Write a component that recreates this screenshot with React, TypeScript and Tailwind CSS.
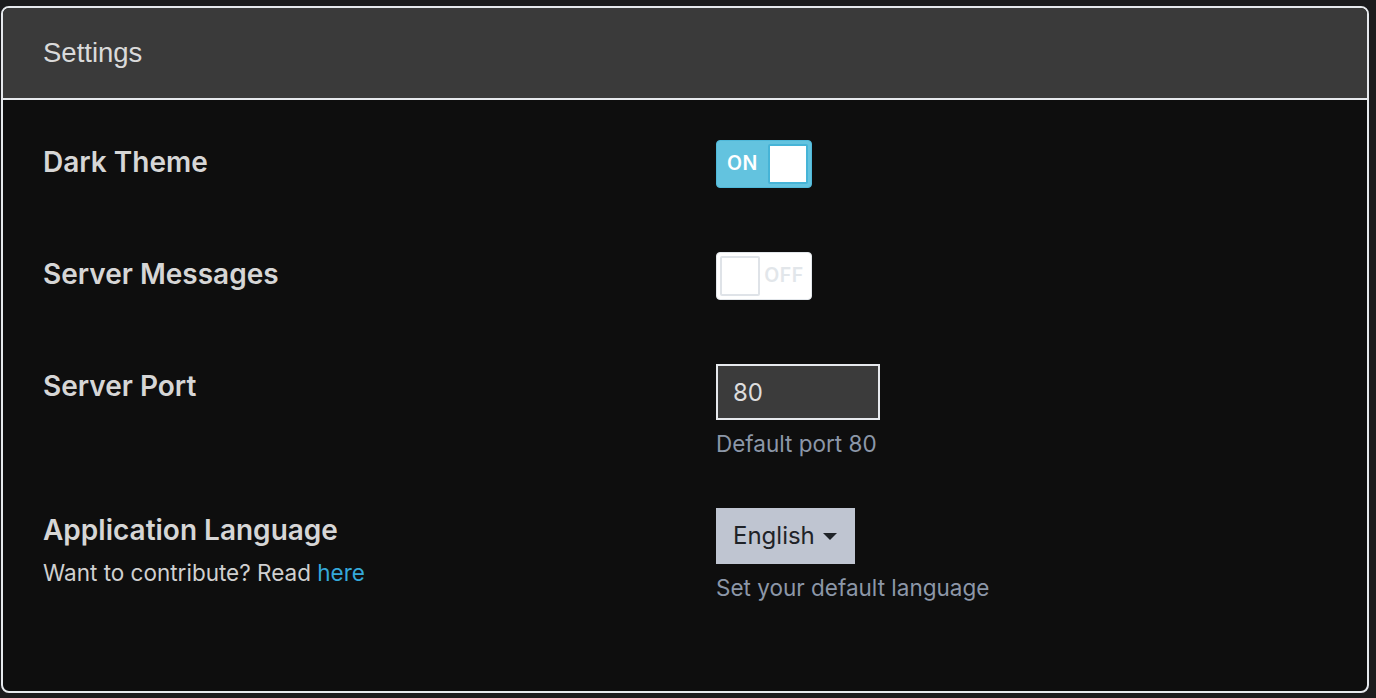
import { useState } from 'react'

const inter = { fontFamily: 'Inter, "Noto Sans", sans-serif' }

function Toggle({ on, onChange }: { on: boolean; onChange: () => void }) {
  return on ? (
    <button
      type="button"
      onClick={onChange}
      className="flex h-[48px] w-[96px] items-center rounded-[4px] border border-[#4fb8d9] bg-[#63c3df] p-[3px]"
    >
      <span className="flex-1 pr-[3px] text-center text-[19.5px] font-semibold tracking-wide text-white">ON</span>
      <span className="h-[40px] w-[40px] rounded-[2px] border-2 border-[#46b4d7] bg-white" />
    </button>
  ) : (
    <button
      type="button"
      onClick={onChange}
      className="flex h-[48px] w-[96px] items-center rounded-[4px] border border-[#e2e6ea] bg-white p-[3px]"
    >
      <span className="h-[40px] w-[40px] rounded-[2px] border-2 border-[#dfe3e8] bg-white" />
      <span className="flex-1 text-center text-[19.5px] font-semibold tracking-wide text-[#e2e6ea]">OFF</span>
    </button>
  )
}

function Row({
  label,
  sub,
  children,
  className = '',
}: {
  label: string
  sub?: React.ReactNode
  children: React.ReactNode
  className?: string
}) {
  return (
    <div className={`grid grid-cols-[673px_1fr] ${className}`}>
      <div className="pt-[5px]">
        <div className="text-[28px] font-semibold leading-[34px] text-[#d6d6d6]">{label}</div>
        {sub && <div className="mt-[12px] text-[22.5px] leading-[28px] text-[#d0d0d0]">{sub}</div>}
      </div>
      <div>{children}</div>
    </div>
  )
}

export default function App() {
  const [dark, setDark] = useState(true)
  const [messages, setMessages] = useState(false)
  const [port, setPort] = useState('80')

  return (
    <div className="h-[698px] w-[1376px] bg-[#1b1b1d] pt-[6px] pl-[1px]">
      <div className="h-[687px] w-[1368px] overflow-hidden rounded-[8px] border-2 border-[#e6e9ed] bg-[#0e0e0e]">
        <div className="flex h-[92px] items-center border-b-2 border-[#e6e9ed] bg-[#3a3a3a] px-[40px]">
          <h1
            className="text-[27.5px] font-normal text-[#dadada]"
            style={{ fontFamily: '"Liberation Sans", Arial, sans-serif' }}
          >
            Settings
          </h1>
        </div>

        <div className="px-[40px] pt-[40px]" style={inter}>
          <Row label="Dark Theme">
            <Toggle on={dark} onChange={() => setDark(!dark)} />
          </Row>

          <Row label="Server Messages" className="mt-[64px]">
            <Toggle on={messages} onChange={() => setMessages(!messages)} />
          </Row>

          <Row label="Server Port" className="mt-[64px]">
            <input
              value={port}
              onChange={(e) => setPort(e.target.value)}
              className="block h-[56px] w-[164px] border-2 border-[#e6e9ed] bg-[#3b3b3b] px-[15px] text-[24px] text-[#dddddd] outline-none"
            />
            <p className="mt-[10px] text-[22.5px] leading-[28px] text-[#8c97a8]">Default port 80</p>
          </Row>

          <Row
            label="Application Language"
            className="mt-[50px]"
            sub={
              <>
                Want to contribute? Read <a href="#" className="text-[#35a9da]">here</a>
              </>
            }
          >
            <button
              type="button"
              className="flex h-[56px] items-center gap-[8px] bg-[#bfc5d1] pl-[17px] pr-[18px] text-[24px] text-[#1f2328]"
            >
              English
              <svg width="14" height="7" viewBox="0 0 14 7">
                <path d="M0 0h14L7 7z" fill="#1f2328" />
              </svg>
            </button>
            <p className="mt-[10px] text-[22.5px] leading-[28px] text-[#8c97a8]">Set your default language</p>
          </Row>
        </div>
      </div>
    </div>
  )
}
